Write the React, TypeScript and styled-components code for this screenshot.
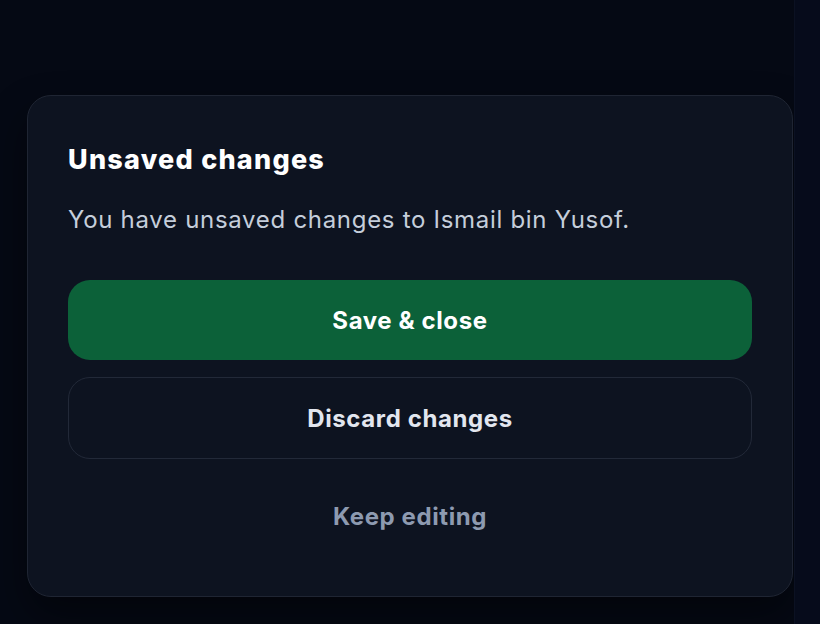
import React from "react";
import styled, { createGlobalStyle } from "styled-components";

const Global = createGlobalStyle`
  html, body { margin: 0; padding: 0; background: #050914; }
  body { font-family: Inter, "Noto Sans", sans-serif; }
  * { box-sizing: border-box; }
`;

const Page = styled.div`
  display: flex;
  width: 820px;
  height: 624px;
  background: #050914;
  overflow: hidden;
`;

const Main = styled.main`
  flex: 1;
  padding: 95px 1px 27px 27px;
  display: flex;
  align-items: flex-start;
`;

const SideStrip = styled.aside`
  width: 26px;
  background: #060b1b;
  border-left: 1px solid #0b1122;
`;

const Card = styled.section`
  width: 766px;
  background: #0d1320;
  border: 1px solid #1f2533;
  border-radius: 24px;
  padding: 40px;
  display: flex;
  flex-direction: column;
  box-shadow: 0 20px 40px rgba(0, 0, 0, 0.45);
`;

const Title = styled.h2`
  margin: 0;
  font-size: 27px;
  line-height: 47px;
  font-weight: 800;
  color: #ffffff;
  letter-spacing: 1.25px;
`;

const Body = styled.p`
  margin: 21px 0 0;
  font-size: 24px;
  line-height: 32px;
  font-weight: 400;
  color: #c5cedb;
  letter-spacing: 0.7px;
`;

const Actions = styled.div`
  display: flex;
  flex-direction: column;
  gap: 17px;
  margin-top: 44px;
`;

const Button = styled.button<{ $variant: "primary" | "outline" | "ghost" }>`
  height: ${(p) => (p.$variant === "outline" ? "82px" : "80px")};
  width: 100%;
  border-radius: 22px;
  font-family: inherit;
  font-size: 24px;
  font-weight: 700;
  letter-spacing: 0.6px;
  cursor: pointer;
  display: flex;
  align-items: center;
  justify-content: center;
  border: 1px solid
    ${(p) => (p.$variant === "outline" ? "#222938" : "transparent")};
  background: ${(p) => (p.$variant === "primary" ? "#0c6139" : "transparent")};
  color: ${(p) =>
    p.$variant === "primary" ? "#ffffff" : p.$variant === "outline" ? "#e2e6ef" : "#8d9ab0"};
`;

export default function App() {
  return (
    <>
      <Global />
      <Page>
        <Main>
          <Card>
            <Title>Unsaved changes</Title>
            <Body>You have unsaved changes to Ismail bin Yusof.</Body>
            <Actions>
              <Button $variant="primary">Save &amp; close</Button>
              <Button $variant="outline">Discard changes</Button>
              <Button $variant="ghost">Keep editing</Button>
            </Actions>
          </Card>
        </Main>
        <SideStrip />
      </Page>
    </>
  );
}
